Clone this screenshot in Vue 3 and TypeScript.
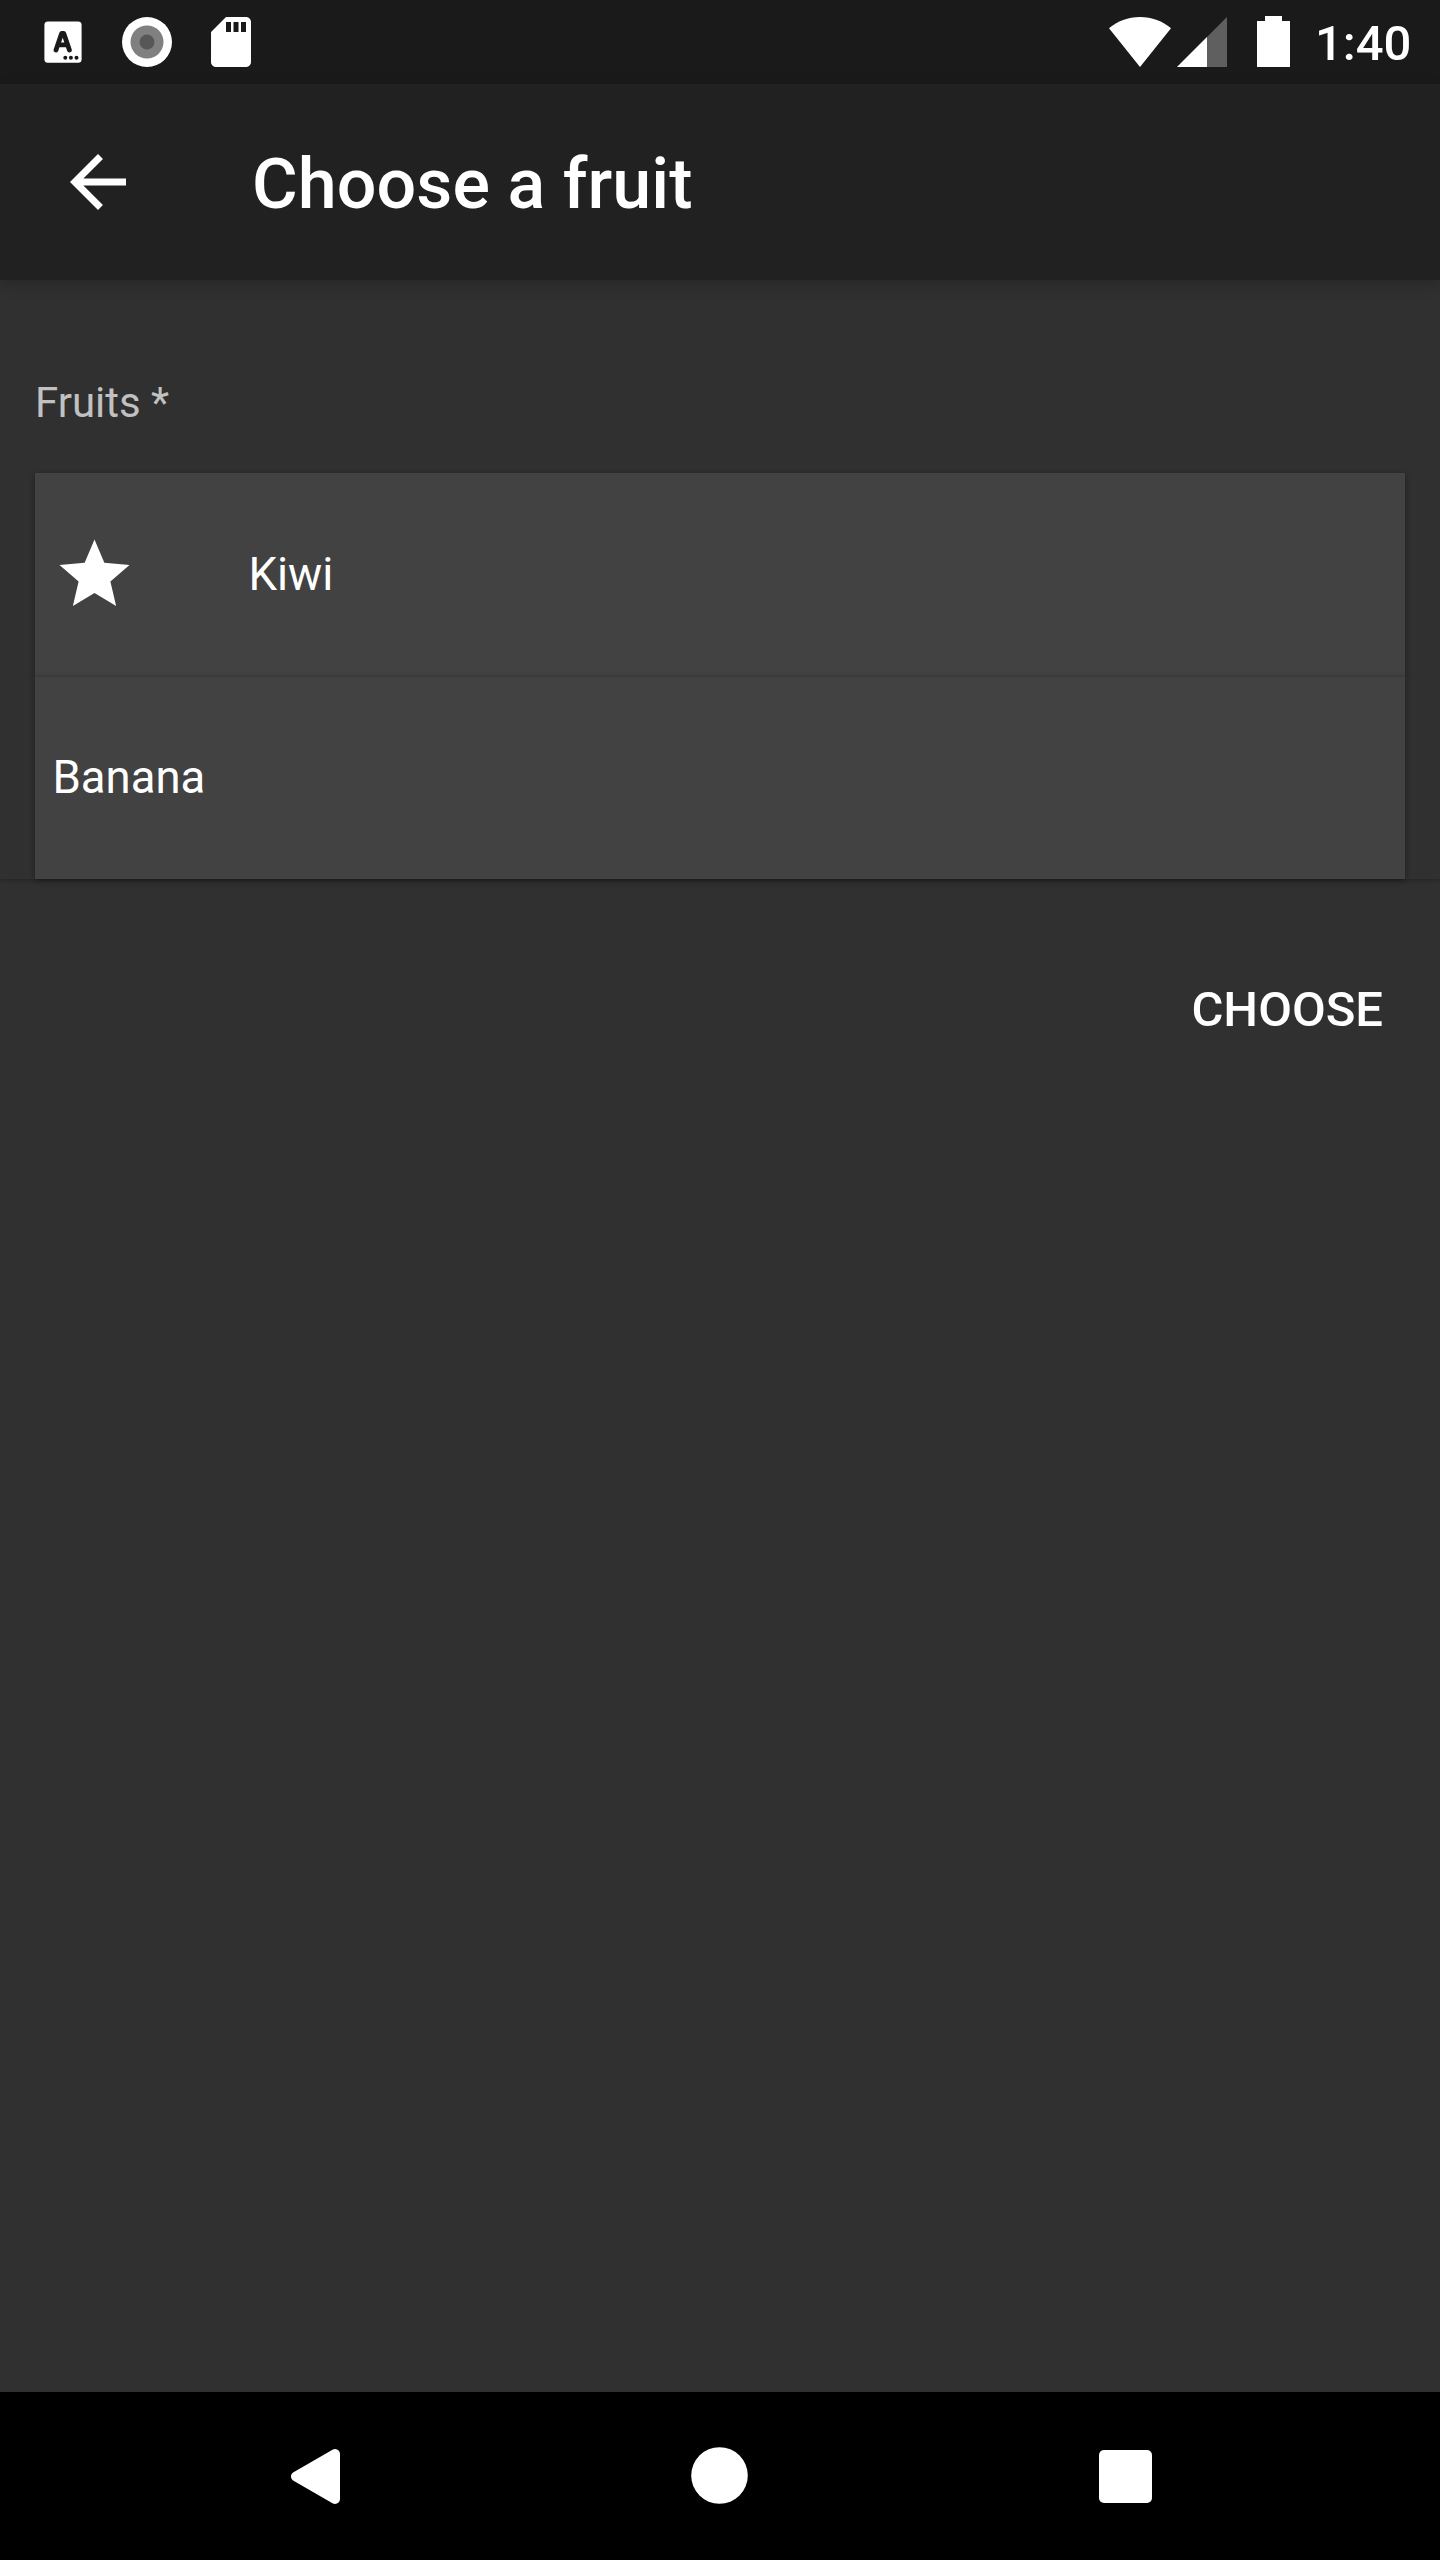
<script setup lang="ts">
interface Fruit {
  name: string
  starred: boolean
}

const fruits: Fruit[] = [
  { name: 'Kiwi', starred: true },
  { name: 'Banana', starred: false },
]
</script>

<template>
  <div class="screen">
    <header class="status">
      <div class="notifications">
        <svg width="38" height="42" viewBox="0 0 38 42">
          <rect x="0.4" y="0.4" width="37.2" height="41.4" rx="3.5" fill="#fff" />
          <path d="M12 29 17.600 12.500h2.200L25.400 29M14.500 23.800h8.500" fill="none" stroke="#1a1a1a" stroke-width="4.800" stroke-linecap="round" stroke-linejoin="round" />
          <g fill="#1a1a1a">
            <circle cx="21.3" cy="36.700" r="2" />
            <circle cx="26.900" cy="36.700" r="2" />
            <circle cx="32.500" cy="36.700" r="2" />
          </g>
        </svg>
        <svg class="ring" width="50" height="50" viewBox="0 0 50 50">
          <circle cx="25" cy="25" r="25" fill="#fff" />
          <circle cx="25" cy="25" r="16.5" fill="#808080" />
          <circle cx="25" cy="25" r="7.5" fill="#575757" />
        </svg>
        <svg class="sd" width="40" height="50" viewBox="4 2 16 20">
          <path d="M18 2h-8L4.02 8 4 20c0 1.1.9 2 2 2h12c1.1 0 2-.9 2-2V4c0-1.1-.9-2-2-2zm-6 6h-2V4h2v4zm3 0h-2V4h2v4zm3 0h-2V4h2v4z" fill="#fff" />
        </svg>
      </div>
      <div class="system">
        <svg width="62" height="50" viewBox="0 0 62 50">
          <path d="M31 50 0 11.3C8.5 4 19 0 31 0s22.500 4 31 11.300z" fill="#fff" />
        </svg>
        <svg class="signal" width="50" height="50" viewBox="0 0 50 50">
          <path d="M50 0V50H0z" fill="#5f5f5f" />
          <path d="M30 20V50H0z" fill="#fff" />
        </svg>
        <svg class="battery" width="33" height="51" viewBox="0 0 33 51">
          <path d="M8 0h17v5h8v46H0V5h8z" fill="#fff" />
        </svg>
        <span class="clock">1:40</span>
      </div>
    </header>

    <div class="toolbar">
      <svg class="back" width="84" height="84" viewBox="0 0 24 24">
        <path d="M20 11H7.830l5.590-5.590L12 4l-8 8 8 8 1.410-1.410L7.830 13H20v-2z" fill="#fff" />
      </svg>
      <h1>Choose a fruit</h1>
    </div>

    <main>
      <section class="field">
        <div class="label">Fruits *</div>
        <div v-for="fruit in fruits" :key="fruit.name" class="card">
          <svg v-if="fruit.starred" class="star" width="85" height="85" viewBox="-0.143 -0.171 24.286 24.286">
            <path d="M12 17.270 18.180 21l-1.640-7.030L22 9.240l-7.190-.61L12 2 9.190 8.630 2 9.240l5.460 4.730L5.820 21z" fill="#fff" />
          </svg>
          <span class="name">{{ fruit.name }}</span>
        </div>
      </section>
      <div class="actions">
        <button type="button">CHOOSE</button>
      </div>
    </main>

    <nav>
      <svg width="50" height="58" viewBox="0 0 50 58">
        <path d="M5 29.500 44 7V52z" fill="#fff" stroke="#fff" stroke-width="10" stroke-linejoin="round" />
      </svg>
      <svg class="home" width="57" height="57" viewBox="0 0 57 57">
        <circle cx="28.500" cy="28.500" r="28.300" fill="#fff" />
      </svg>
      <svg class="recents" width="53" height="53" viewBox="0 0 53 53">
        <rect width="53" height="53" rx="5" fill="#fff" />
      </svg>
    </nav>
  </div>
</template>

<style>
body {
  margin: 0;
  background: #303030;
}
</style>

<style scoped>
.screen {
  width: 1440px;
  height: 2560px;
  display: flex;
  flex-direction: column;
  overflow: hidden;
  background: #303030;
  color: #fff;
  font-family: Roboto, sans-serif;
}

svg {
  display: block;
  flex: none;
}

.status {
  height: 84px;
  flex: none;
  box-sizing: border-box;
  padding: 0 29px 0 44px;
  display: flex;
  justify-content: space-between;
  background: #1a1a1a;
}

.notifications,
.system {
  display: flex;
  align-items: center;
}

.ring {
  margin-left: 40px;
}

.sd {
  margin-left: 39px;
}

.signal {
  margin-left: 6px;
}

.battery {
  margin: 0 0 1px 30px;
}

.clock {
  width: 96px;
  margin: 4px 0 0 25px;
  font-size: 49px;
  font-weight: 500;
  line-height: 58px;
  white-space: nowrap;
}

.toolbar {
  position: relative;
  height: 196px;
  flex: none;
  display: flex;
  align-items: center;
  background: #212121;
  box-shadow: 0 4px 14px rgba(0, 0, 0, 0.2);
}

.back {
  margin: 0 112px 0 56px;
}

h1 {
  margin: 4px 0 0;
  font-size: 70px;
  font-weight: 500;
  line-height: 82px;
  letter-spacing: 0.07px;
}

main {
  flex: 1;
}

.field {
  height: 599px;
  box-sizing: border-box;
  padding: 0 35px;
  box-shadow: 0 2px 4px rgba(0, 0, 0, 0.2);
}

.label {
  height: 50px;
  padding: 98px 0 45px;
  font-size: 42px;
  line-height: 50px;
  color: #c1c1c1;
}

.card {
  height: 203px;
  box-sizing: border-box;
  padding-left: 17px;
  display: flex;
  align-items: center;
  font-size: 45.5px;
  line-height: 53px;
  background: #424242;
  box-shadow: 0 2px 6px rgba(0, 0, 0, 0.35);
}

.card + .card {
  box-shadow: 0 2px 6px rgba(0, 0, 0, 0.35), inset 0 1px #3a3a3a;
}

.star {
  margin-right: 111px;
}

.name {
  margin-left: 0.5px;
}

.actions {
  display: flex;
  justify-content: flex-end;
  padding: 102px 57px 0 0;
}

button {
  margin: 0;
  padding: 0;
  border: 0;
  background: none;
  color: inherit;
  font: 500 49px/58px Roboto, sans-serif;
}

nav {
  height: 168px;
  flex: none;
  box-sizing: border-box;
  padding-left: 291px;
  display: flex;
  align-items: center;
  background: #000;
}

.home {
  margin: 0 0 2px 350px;
}

.recents {
  margin-left: 351px;
}
</style>
